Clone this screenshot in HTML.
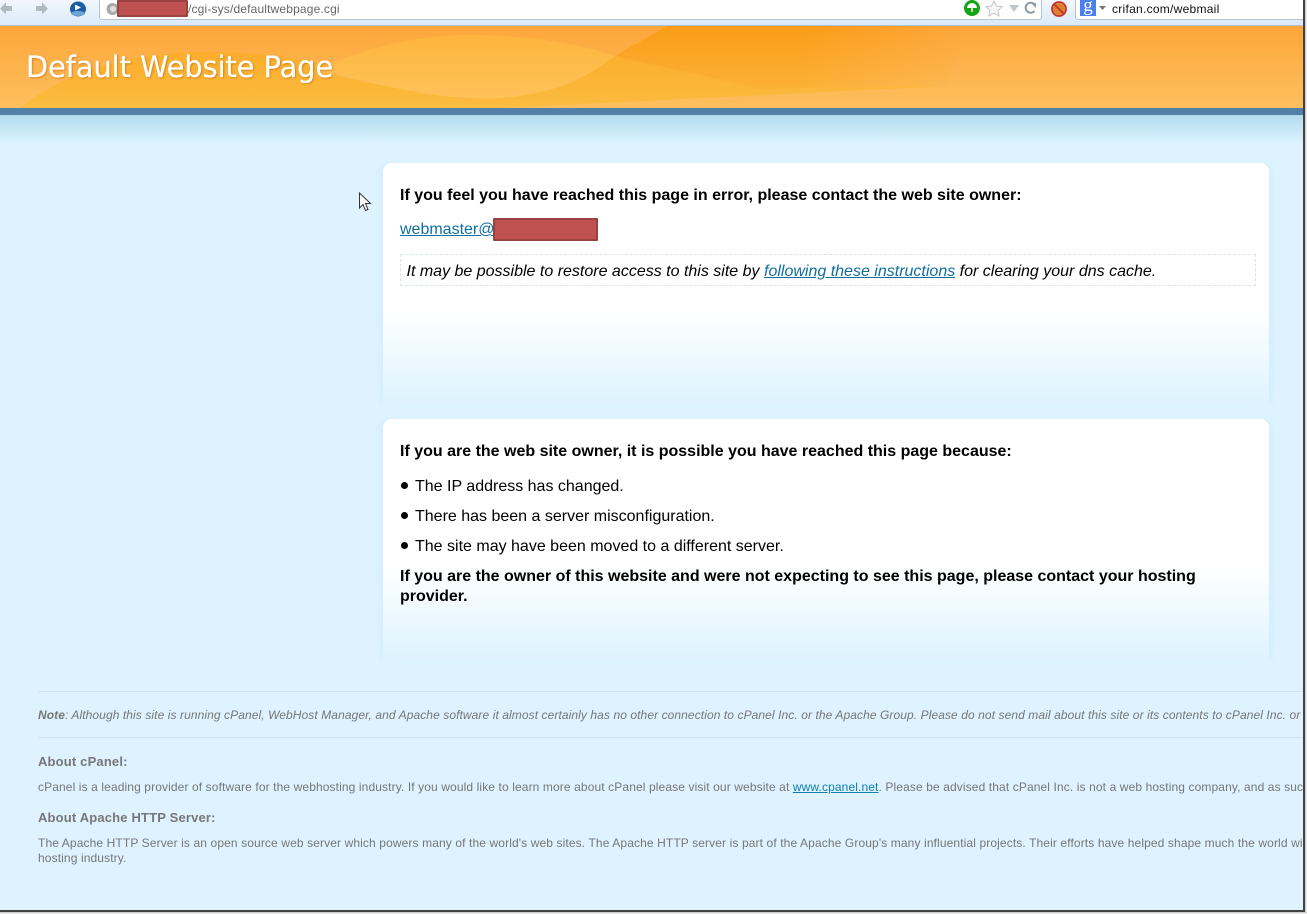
<!DOCTYPE html>
<html><head><meta charset="utf-8"><style>
html,body{margin:0;padding:0;width:1307px;height:914px;overflow:hidden;background:#fff}
body{position:relative;font-family:"Liberation Sans",Arial,sans-serif}
.a{position:absolute;white-space:nowrap}
#page{position:absolute;left:0;top:0;width:1303px;height:910px;background:#def3ff;overflow:hidden}
.card{position:absolute;left:383px;width:886px;border-radius:9px 9px 0 0;box-shadow:-5px 0 5px -1px #d6effc,5px 0 5px -1px #d6effc}
.t{font-size:16px;color:#000;line-height:20px}
.b{font-weight:bold}
a{color:#0f6f9f;text-decoration:underline}
.f{color:#767676;font-size:12px;line-height:15px;letter-spacing:.112px}
.h{color:#777;font-size:13px;font-weight:bold;line-height:16px;letter-spacing:.17px}
.red{position:absolute;background:#bf5250;border:2px solid #994341;box-sizing:border-box;border-radius:1px}
.bul{position:absolute;left:401px;width:7px;height:7px;border-radius:50%;background:#000}
hr{position:absolute;left:38px;width:1265px;margin:0;border:0;height:1px;background:#cfe3f0}
</style></head><body>
<div id="page">
<div class="a" style="left:0;top:0;width:1303px;height:26px;background:linear-gradient(#f2f7fc,#d9e9f9)"></div>
<div class="a" style="left:0;top:25px;width:1303px;height:1px;background:#b0c0d2"></div>
<div class="a" style="left:99px;top:0;width:943px;height:20px;background:#fff;border:1px solid #b8c4d2;border-top:0;box-sizing:border-box;border-radius:0 0 3px 3px"></div>
<div class="a" style="left:1075px;top:0;width:228px;height:20px;background:#fff;border:1px solid #b8c4d2;border-top:0;border-right:0;box-sizing:border-box;border-radius:0 0 0 3px"></div>
<svg class="a" style="left:0;top:0" width="90" height="18" viewBox="0 0 90 18"><path d="M0 8.500l6-6v3.500h6v5H6v3.500z" fill="#b0b8c0"/><path d="M48 8.500l-6-6v3.500h-6v5h6v3.500z" fill="#b0b8c0"/><ellipse cx="78" cy="9" rx="8" ry="7.500" fill="#1d5da3"/><ellipse cx="78" cy="13.500" rx="7" ry="2.500" fill="#6da3d6"/><path d="M75 4.500l6 3-6 3z" fill="#fff"/></svg>
<svg class="a" style="left:105px;top:1px" width="14" height="16"><circle cx="7.500" cy="8" r="6" fill="#aaa"/><circle cx="8" cy="8" r="3" fill="#ddd"/></svg>
<div class="red" style="left:117px;top:0;width:71px;height:17px"></div>
<div class="a" style="left:188px;top:1px;font-size:12px;line-height:16px;color:#666;letter-spacing:.16px">/cgi-sys/defaultwebpage.cgi</div>
<svg class="a" style="left:962px;top:0" width="80" height="18"><circle cx="10" cy="8" r="8" fill="#16a316"/><path d="M5 8a5 5 0 0 1 10 0zM9.300 8h1.400v4H9.300z" fill="#fff"/><path d="M32 1l2.500 5 5.500.7-4 3.800 1 5.500-5-2.700-5 2.700 1-5.500-4-3.800 5.500-.7z" fill="#f4f5f6" stroke="#c4c7cb"/><path d="M47 5h10l-5 7z" fill="#c0c6cc"/><path d="M72.500 4.500A5 5 0 1 0 72.500 11" fill="none" stroke="#8f9aa5" stroke-width="2"/><path d="M69 3h5v5z" fill="#8f9aa5"/></svg>
<svg class="a" style="left:1050px;top:0" width="18" height="18"><circle cx="9" cy="9" r="6" fill="#d9822b"/><circle cx="9" cy="9" r="7" fill="none" stroke="#c9302c" stroke-width="1.800"/><path d="M4 4l10 10" stroke="#c9302c" stroke-width="1.800"/></svg>
<div class="a" style="left:1080px;top:0;width:16px;height:16px;overflow:hidden;background:#4a7ff0;color:#fff;font:19px/12px 'Liberation Serif',serif;text-align:center">g</div>
<svg class="a" style="left:1098px;top:5px" width="10" height="6"><path d="M1 1h7L4.500 5z" fill="#777"/></svg>
<div class="a" style="left:1112px;top:1px;font-size:12px;line-height:16px;color:#111;letter-spacing:.27px">crifan.com/webmail</div>

<div class="a" style="left:0;top:26px;width:1303px;height:82px;overflow:hidden;background:linear-gradient(#fda63a,#fdbf5e)">
<svg width="1303" height="82" viewBox="0 0 1303 82" style="position:absolute;left:0;top:0">
<defs>
<linearGradient id="gd" x1="0" y1="0" x2="0" y2="1"><stop offset="0" stop-color="#fb9c18"/><stop offset="1" stop-color="#fbb137"/></linearGradient>
<linearGradient id="gf" gradientUnits="userSpaceOnUse" x1="600" y1="0" x2="965" y2="0"><stop offset="0" stop-color="#fff"/><stop offset=".55" stop-color="#fff"/><stop offset="1" stop-color="#000"/></linearGradient>
<mask id="m"><rect x="0" y="0" width="1303" height="82" fill="url(#gf)"/></mask>
<linearGradient id="gy" x1="0" y1="0" x2="0" y2="1"><stop offset="0" stop-color="#fbad2c"/><stop offset="1" stop-color="#fbbc40"/></linearGradient>
<linearGradient id="gb" x1="0" y1="0" x2="0" y2="1"><stop offset="0" stop-color="#fdb53c"/><stop offset="1" stop-color="#ffc25a"/></linearGradient>
</defs>
<path d="M20 82C60 50 120 26 207 26C270 26 310 36 340 42L476 30L615 30L762 63L947 60L501 82Z" fill="url(#gy)"/>
<path d="M667 0C650 11 630 20 615 30L762 63L947 60L965 0Z" fill="url(#gd)" mask="url(#m)"/>
<path d="M320 42C370 20 420 9 470 9C530 9 580 18 615 30C590 48 570 60 540 66C510 73 490 73 470 72C420 70 370 56 320 46Z" fill="url(#gb)"/>
</svg>
</div>
<div class="a" style="left:26px;top:48px;font-family:'DejaVu Sans','Liberation Sans',sans-serif;font-size:29px;line-height:38px;color:#fff;-webkit-text-stroke:.2px #fff;text-shadow:1px 1px 2px rgba(170,90,0,.55);transform-origin:0 0;transform:scaleX(.99)">Default Website Page</div>
<div class="a" style="left:0;top:108px;width:1303px;height:7px;background:#5280a9"></div>
<div class="a" style="left:0;top:115px;width:1303px;height:30px;background:linear-gradient(#b2dcee,#def3ff)"></div>

<div class="card" style="top:163px;height:241px;background:linear-gradient(#fff 0,#fff 148px,#def3ff 238px)"></div>
<div class="a t b" style="left:400px;top:186px">If you feel you have reached this page in error, please contact the web site owner:</div>
<div class="a t" style="left:400px;top:220px"><a href="#">webmaster@</a></div>
<div class="red" style="left:493px;top:218px;width:105px;height:23px"></div>
<div class="a" style="left:400px;top:254px;width:856px;height:32px;box-sizing:border-box;border:1px dashed #d9e4ea"></div>
<div class="a t" style="left:406.500px;top:262px;font-style:italic">It may be possible to restore access to this site by <a href="#">following these instructions</a> for clearing your dns cache.</div>

<div class="card" style="top:419px;height:241px;background:linear-gradient(#fff 0,#fff 148px,#def3ff 238px)"></div>
<div class="a t b" style="left:400px;top:442px">If you are the web site owner, it is possible you have reached this page because:</div>
<div class="bul" style="top:482px"></div><div class="a t" style="left:415px;top:477px">The IP address has changed.</div>
<div class="bul" style="top:512px"></div><div class="a t" style="left:415px;top:507px">There has been a server misconfiguration.</div>
<div class="bul" style="top:542px"></div><div class="a t" style="left:415px;top:537px">The site may have been moved to a different server.</div>
<div class="a t b" style="left:400px;top:567px">If you are the owner of this website and were not expecting to see this page, please contact your hosting<br>provider.</div>

<hr style="top:691px"><hr style="top:737px">
<div class="a f" style="left:38px;top:708px;font-style:italic;letter-spacing:.085px"><b>Note</b>: Although this site is running cPanel, WebHost Manager, and Apache software it almost certainly has no other connection to cPanel Inc. or the Apache Group. Please do not send mail about this site or its contents to cPanel Inc. or the Apache Group.</div>
<div class="a h" style="left:38px;top:754px">About cPanel:</div>
<div class="a f" style="left:38px;top:780px">cPanel is a leading provider of software for the webhosting industry. If you would like to learn more about cPanel please visit our website at <a href="#" style="color:#0f7fb0">www.cpanel.net</a>. Please be advised that cPanel Inc. is not a web hosting company, and as such has no control over content found on this site.</div>
<div class="a h" style="left:38px;top:810px">About Apache HTTP Server:</div>
<div class="a f" style="left:38px;top:836px;letter-spacing:.115px">The Apache HTTP Server is an open source web server which powers many of the world's web sites. The Apache HTTP server is part of the Apache Group's many influential projects. Their efforts have helped shape much the world wide web and the<br>hosting industry.</div>
<svg class="a" style="left:358px;top:192px" width="15" height="20"><path d="M1.500 1v15l3.500-3.500 2.500 6 2.500-1-2.500-6h5z" fill="#fff" stroke="#333" stroke-width="1"/></svg>
</div>
<div class="a" style="left:1303px;top:0;width:2px;height:912px;background:#444"></div>
<div class="a" style="left:1305px;top:0;width:2px;height:914px;background:linear-gradient(90deg,#bbb,#fff)"></div>
<div class="a" style="left:0;top:910px;width:1305px;height:2px;background:#444"></div>
<div class="a" style="left:0;top:912px;width:1307px;height:2px;background:linear-gradient(#bbb,#fff)"></div>
</body></html>
